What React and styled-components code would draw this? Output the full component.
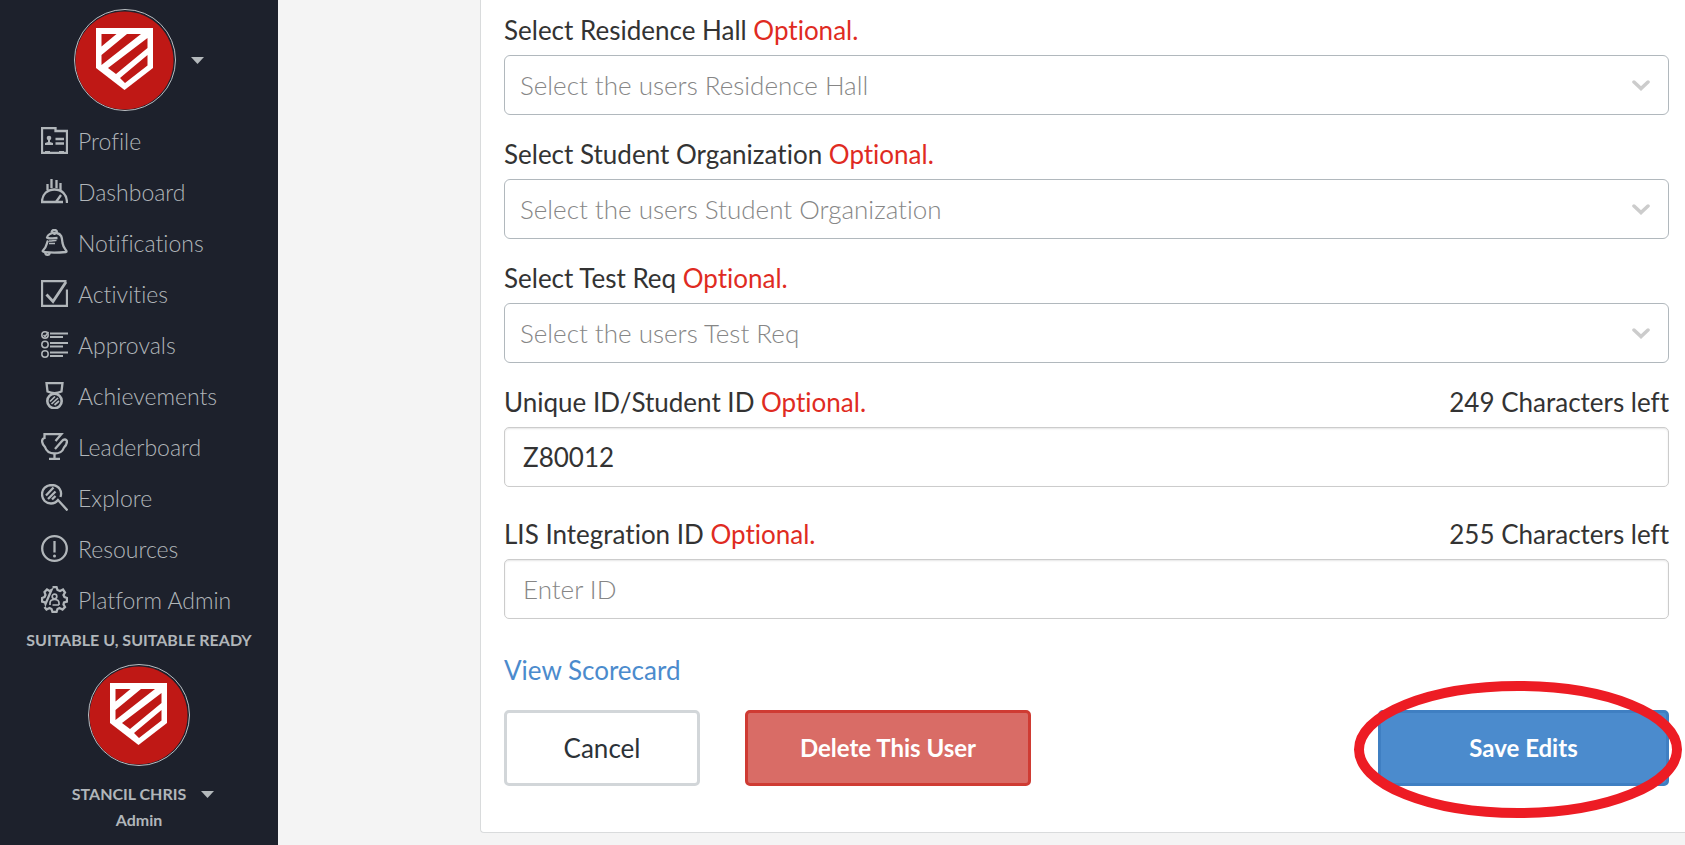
import { useState } from "react";
import styled, { createGlobalStyle } from "styled-components";

const navItems = [
  { label: "Profile", icon: "profile" },
  { label: "Dashboard", icon: "dashboard" },
  { label: "Notifications", icon: "bell" },
  { label: "Activities", icon: "activities" },
  { label: "Approvals", icon: "approvals" },
  { label: "Achievements", icon: "medal" },
  { label: "Leaderboard", icon: "trophy" },
  { label: "Explore", icon: "explore" },
  { label: "Resources", icon: "resources" },
  { label: "Platform Admin", icon: "admin" },
];

const icons = {
  profile: (
    <>
      <path d="M1 1H14.5V4H26V26H1Z" />
      <circle cx="8" cy="11" r="2.300" fill="currentColor" stroke="none" />
      <path d="M7 12H9V15L12 16V18H4V16L7 15Z" fill="currentColor" stroke="none" />
      <path d="M14.5 12H23M14.5 16.5H23" />
      <path d="M4 24.5H9M18 24.5H23" strokeWidth="1" />
    </>
  ),
  dashboard: (
    <>
      <path d="M22 24H1C1 16 6.500 11.500 13.500 11.500C20.500 11.500 26 16 26 25" />
      <path d="M15 24L20 17M6.500 6V12M10.500 1V10M15.500 2V10M19.500 5V12" />
    </>
  ),
  bell: (
    <>
      <path d="M7 11.500C5.500 14 6 18 2 21.500C1 23 3 22.500 4.500 23.200C12 24 20 23.500 25 23C27 22 22.500 20 21.500 14C21 8 20.500 5 15.500 4C10 3 6 6.500 6 8.500C7 10 10 9.500 16.500 9" />
      <path d="M8 12C10 12.500 14 11 15.500 11.500M8 14.500H14" strokeWidth="1.500" />
      <path d="M10.500 3.500C11 1 13 0.800 13.500 0.800C15 1 16 2 16 3.500M13.500 3V6M4 24C5 26.500 8 26.500 9 24" />
    </>
  ),
  activities: (
    <>
      <path d="M26 9.500V26H1V1H25.500" />
      <path d="M5.500 14.500L12 21.500L25 2" strokeWidth="2.800" />
    </>
  ),
  approvals: (
    <>
      <g strokeWidth="1.500">
        <circle cx="4" cy="4" r="3.200" />
        <circle cx="4" cy="13.500" r="3.200" />
        <circle cx="4" cy="23" r="3.200" />
        <path d="M2.500 4L4 5.500L7.500 1" />
      </g>
      <path d="M9 2.500H27M9 12H27M9 21.500H27" strokeWidth="2" />
      <path d="M9 6H22M9 15.500H22M9 25H22" strokeWidth="2" />
    </>
  ),
  medal: (
    <>
      <path d="M5.500 1H21.500L20.500 9.500C16 11.500 11 11.500 6.500 9.500Z" />
      <circle cx="13.500" cy="19" r="7.200" strokeWidth="2.600" />
      <path d="M9 19.500L14 14.500M10.500 22L17 16M13.500 23L18 19" strokeWidth="1.700" />
    </>
  ),
  trophy: (
    <>
      <path d="M14.500 8L20.500 1H3.500V5C1.500 5.500 0.800 7 1.200 9C1.500 11.500 3 13 4 14C5.500 19 9.500 20.500 13.500 20.500C18 20.500 21.500 19 23 14.500C25 12.500 26 10.500 26 8C25.500 6.500 23 5.500 21 8L14 16" />
      <path d="M13.500 20.500V26M8 26H19" />
    </>
  ),
  explore: (
    <>
      <path d="M19.500 13C21.500 7 18 1.200 11 1C5 1 1 5 1 10C1 16 5 19.500 10 19.500C13 19.500 15.500 18 17 16L26.500 26.500" />
      <path d="M5 11.500L12.500 3.500M7 15L14.500 7.500M11 15.500L14.500 12" />
    </>
  ),
  resources: (
    <>
      <circle cx="13.500" cy="13.500" r="12.300" />
      <path d="M13.500 6V17.500" />
      <circle cx="13.500" cy="21" r="1.500" fill="currentColor" stroke="none" />
    </>
  ),
  admin: (
    <>
      <path d="M11.500 1H15.500L16.500 4L19 5L22 3.500L24 6.500L22.500 9L23.500 11L26 12V15.500L23 16.500L22.500 18.500L24 21L21.500 23.500L18.500 22L16.500 23L15.500 26H11.500L10.500 23L8.500 22L5.500 23.500L3.500 21M4.500 18L4 16.500L1 15.500V12L3.500 11L4.500 9L3.500 6L6 3.500L8.500 5L10.500 4Z" />
      <circle cx="13.500" cy="10.500" r="2.300" strokeWidth="1.700" />
      <path d="M9 19V17C9 14.500 11 13.500 13.500 13.500C16 13.500 18 14.500 18 17V19M11.500 19H18" strokeWidth="1.700" />
    </>
  ),
};

function ShieldLogo() {
  return (
    <Avatar viewBox="0 0 102 102" role="img" aria-label="Suitable">
      <circle cx="51" cy="51" r="50.500" fill="#1d212c" stroke="#b9bec2" />
      <circle cx="50.500" cy="51.500" r="49" fill="#bf1815" />
      <path d="M22 19H79V59L50.500 81L22 59Z" fill="#fff" />
      <path
        d="M27.500 25H42.500L27.500 37.500ZM53 25H67L27.500 56V46ZM73.500 29V39L42 65L34 59ZM73.500 46V56.500L51 74L46 69Z"
        fill="#bf1815"
      />
    </Avatar>
  );
}

function Caret() {
  return (
    <svg width="13" height="7" viewBox="0 0 13 7" aria-hidden="true">
      <path d="M0 0H13L6.500 7Z" fill="#b4b9bc" />
    </svg>
  );
}

function SelectField({ id, label }) {
  return (
    <Field>
      <LabelRow>
        <label htmlFor={id}>
          Select {label} <Optional>Optional.</Optional>
        </label>
      </LabelRow>
      <SelectWrap>
        <Select id={id}>
          <option>Select the users {label}</option>
        </Select>
        <Chevron viewBox="0 0 18 11" aria-hidden="true">
          <path d="M2 2L9 8.500L16 2" />
        </Chevron>
      </SelectWrap>
    </Field>
  );
}

function TextField({ id, label, initial = "", placeholder, limit = 255 }) {
  const [value, setValue] = useState(initial);
  return (
    <Field $spaced>
      <LabelRow>
        <label htmlFor={id}>
          {label} <Optional>Optional.</Optional>
        </label>
        <span>{limit - value.length} Characters left</span>
      </LabelRow>
      <Input
        id={id}
        value={value}
        maxLength={limit}
        placeholder={placeholder}
        onChange={(e) => setValue(e.target.value)}
      />
    </Field>
  );
}

function App() {
  return (
    <Page>
      <GlobalStyle />
      <Sidebar>
        <MenuButton aria-label="Organization menu">
          <ShieldLogo />
          <Caret />
        </MenuButton>
        <Nav>
          {navItems.map((item) => (
            <NavLink href="#" key={item.label}>
              <NavIcon viewBox="0 0 27 27" aria-hidden="true">
                {icons[item.icon]}
              </NavIcon>
              {item.label}
            </NavLink>
          ))}
        </Nav>
        <SideText>SUITABLE U, SUITABLE READY</SideText>
        <UserAvatar>
          <ShieldLogo />
        </UserAvatar>
        <UserButton>
          STANCIL CHRIS
          <Caret />
        </UserButton>
        <SideText>Admin</SideText>
      </Sidebar>
      <Main>
        <Panel>
          <SelectField id="hall" label="Residence Hall" />
          <SelectField id="organization" label="Student Organization" />
          <SelectField id="test" label="Test Req" />
          <TextField id="unique" label="Unique ID/Student ID" initial="Z80012" />
          <TextField id="lis" label="LIS Integration ID" placeholder="Enter ID" />
          <ScoreLink href="#">View Scorecard</ScoreLink>
          <Actions>
            <CancelButton type="button">Cancel</CancelButton>
            <DeleteButton type="button">Delete This User</DeleteButton>
            <SaveWrap>
              <SaveButton type="button">Save Edits</SaveButton>
              <Highlight viewBox="0 0 328 137" aria-hidden="true">
                <ellipse cx="164" cy="68.500" rx="159" ry="63.500" />
              </Highlight>
            </SaveWrap>
          </Actions>
        </Panel>
      </Main>
    </Page>
  );
}

export default App;

const GlobalStyle = createGlobalStyle`
  * {
    box-sizing: border-box;
  }
  body {
    margin: 0;
    background: #f4f4f4;
    color: #333;
    font-family: Lato, "Liberation Sans", sans-serif;
    font-size: 26px;
    line-height: 30px;
    font-variant-ligatures: none;
  }
  button, input, select {
    font: inherit;
    font-variant-ligatures: none;
    color: inherit;
  }
  button {
    cursor: pointer;
  }
  a {
    text-decoration: none;
  }
`;

const Page = styled.div`
  display: flex;
  min-height: 100vh;
`;

const Sidebar = styled.aside`
  display: flex;
  flex-direction: column;
  align-items: center;
  flex: 0 0 278px;
  padding: 9px 0 12px;
  background: #1d212c;
  color: #b1b6ba;
`;

const MenuButton = styled.button`
  display: flex;
  align-items: center;
  gap: 15px;
  padding: 0;
  border: none;
  background: none;
`;

const Avatar = styled.svg`
  display: block;
  width: 102px;
  height: 102px;
`;

const Nav = styled.nav`
  align-self: stretch;
  margin: 4px 0 2px;
`;

const NavLink = styled.a`
  display: flex;
  align-items: center;
  gap: 10px;
  height: 51px;
  padding-left: 41px;
  color: inherit;
  font-size: 23px;
  font-weight: 300;
`;

const NavIcon = styled.svg`
  width: 27px;
  height: 27px;
  fill: none;
  stroke: currentColor;
  stroke-width: 2.3;
`;

const SideText = styled.div`
  font-size: 16px;
  font-weight: 700;
  line-height: 26px;
`;

const UserAvatar = styled.div`
  margin: 11px 0 15px;
`;

const UserButton = styled.button`
  display: flex;
  align-items: center;
  gap: 15px;
  padding: 0 0 0 8px;
  border: none;
  background: none;
  font-size: 16px;
  font-weight: 700;
  line-height: 26px;
`;

const Main = styled.main`
  flex: 1;
  padding-left: 202px;
`;

const Panel = styled.form`
  padding: 15px 16px 46px 23px;
  background: #fff;
  border: solid #d9dbdc;
  border-width: 0 0 1px 1px;
  border-radius: 0 0 0 4px;
`;

const Field = styled.div`
  margin-bottom: ${(props) => (props.$spaced ? "32px" : "24px")};
`;

const LabelRow = styled.div`
  display: flex;
  justify-content: space-between;
  margin-bottom: 10px;
`;

const Optional = styled.span`
  color: #df2b22;
`;

const SelectWrap = styled.div`
  position: relative;
`;

const Select = styled.select`
  display: block;
  appearance: none;
  width: 100%;
  height: 60px;
  padding: 0 50px 0 15px;
  border: 1px solid #b1b8bd;
  border-radius: 6px;
  background: #fff;
  color: #868686;
  font-weight: 300;
`;

const Chevron = styled.svg`
  position: absolute;
  top: 25px;
  right: 19px;
  width: 18px;
  height: 11px;
  fill: none;
  stroke: #ccc;
  stroke-width: 3.5;
  stroke-linecap: round;
  pointer-events: none;
`;

const Input = styled.input`
  display: block;
  width: 100%;
  height: 60px;
  padding: 0 18px;
  border: 1px solid #ccc;
  border-radius: 5px;
  background: #fff;
  box-shadow: inset 0 1px 2px rgba(0, 0, 0, 0.1);

  &::placeholder {
    color: #868686;
    font-weight: 300;
  }
`;

const ScoreLink = styled.a`
  display: inline-block;
  margin: 4px 0 25px;
  color: #4b8bcd;
`;

const Actions = styled.div`
  display: flex;
  gap: 45px;
`;

const Button = styled.button`
  height: 76px;
  border: 3px solid;
  border-radius: 5px;
  color: #fff;
  font-size: 24px;
  font-weight: 700;
`;

const CancelButton = styled(Button)`
  width: 196px;
  border-color: #d2d6d9;
  background: #fff;
  color: #2c3238;
  font-size: 26px;
  font-weight: 400;
`;

const DeleteButton = styled(Button)`
  width: 286px;
  border-color: #cf3b33;
  background: #d96c66;
`;

const SaveWrap = styled.div`
  position: relative;
  margin-left: auto;
`;

const SaveButton = styled(Button)`
  width: 291px;
  border-color: #3f7fc2;
  background: #4b8bcd;
`;

const Highlight = styled.svg`
  position: absolute;
  top: -29px;
  left: -24px;
  width: 328px;
  height: 137px;
  fill: none;
  stroke: #ed1c24;
  stroke-width: 10;
  pointer-events: none;
`;
